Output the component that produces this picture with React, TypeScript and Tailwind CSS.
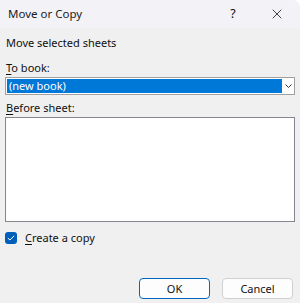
import { X } from 'lucide-react'

export default function App() {
    return (
        <div
            className="w-[300px] h-[303px] bg-[#f0f0f0] rounded-tr-[8px] overflow-hidden flex flex-col text-[11px] text-[#111]"
            style={{ fontFamily: '"Noto Sans", "Segoe UI", sans-serif' }}
        >
            <div className="h-[28px] bg-[#f3f3f7] flex items-center pl-[8px] shrink-0">
                <span className="text-[11.5px] text-[#1b1b1b] flex-1">Move or Copy</span>
                <span className="w-[30px] text-center text-[12.5px] mr-[6px]">?</span>
                <div className="w-[46px] h-[28px] flex items-center justify-center">
                    <X className="w-[16px] h-[16px]" strokeWidth={1.2} />
                </div>
            </div>

            <div className="flex-1 flex flex-col px-[5px]">
                <div className="mt-[6px] h-[18px] leading-[18px] pl-[1px]">Move selected sheets</div>

                <div className="mt-[7px] h-[18px] leading-[18px] pl-[1px]">
                    <span className="underline underline-offset-[2px]">T</span>o book:
                </div>
                <div className="h-[18px] border border-[#a0a0a0] bg-white flex">
                    <div className="flex-1 m-[1px] bg-[#0078d7] text-white leading-[14px] pl-[2px]">(new book)</div>
                    <div className="w-[11px] flex items-center justify-center">
                        <svg width="7" height="4" viewBox="0 0 7 4">
                            <path d="M0.5 0.5 L3.5 3.5 L6.5 0.5" fill="none" stroke="#333" strokeWidth="1" />
                        </svg>
                    </div>
                </div>

                <div className="mt-[4px] h-[18px] leading-[18px] pl-[1px]">
                    <span className="underline underline-offset-[2px]">B</span>efore sheet:
                </div>
                <div className="h-[105px] border border-[#828790] bg-white" />

                <label className="mt-[10px] flex items-center h-[12px]">
                    <span className="w-[12px] h-[12px] rounded-[3px] bg-[#005fb8] flex items-center justify-center">
                        <svg width="8" height="6" viewBox="0 0 8 6">
                            <path d="M0.8 3 L3 5 L7.2 0.8" fill="none" stroke="white" strokeWidth="1" />
                        </svg>
                    </span>
                    <span className="ml-[8px]">
                        <span className="underline underline-offset-[2px]">C</span>reate a copy
                    </span>
                </label>

                <div className="mt-auto mb-[4px] flex justify-end gap-[12px] pr-[2px]">
                    <button className="w-[71px] h-[21px] rounded-[4px] bg-[#fdfdfd] border border-[#0067c0] leading-none">
                        OK
                    </button>
                    <button className="w-[71px] h-[21px] rounded-[4px] bg-[#fdfdfd] border border-[#d0d0d0] leading-none">
                        Cancel
                    </button>
                </div>
            </div>
        </div>
    )
}
